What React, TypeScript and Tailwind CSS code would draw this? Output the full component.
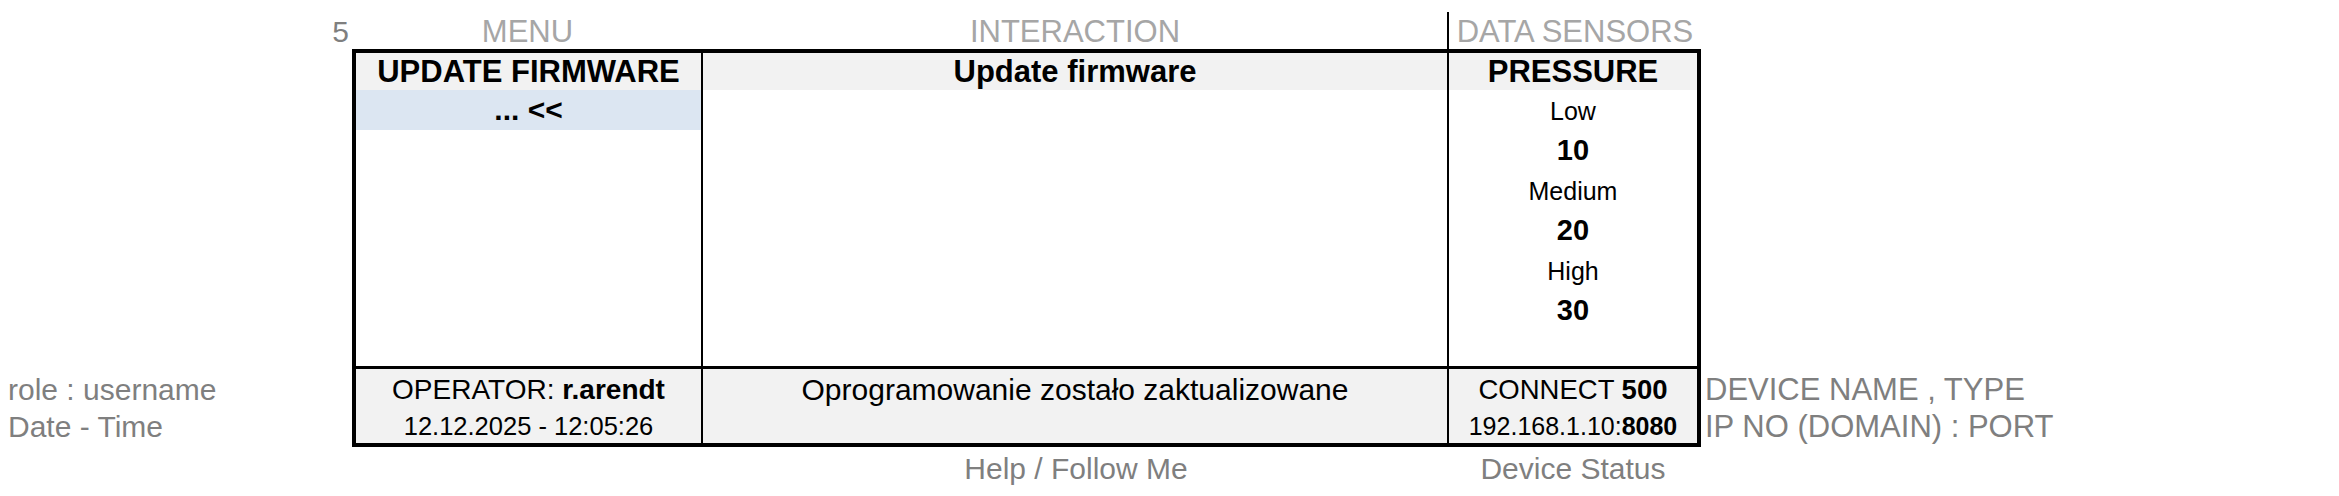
export default function App() {
  const gray = "text-[#7f7f7f]";
  const light = "text-[#a6a6a6]";
  return (
    <div className="w-[2339px] h-[496px] bg-white text-black overflow-hidden font-['Liberation_Sans',Arial,sans-serif]">
      {/* top labels */}
      <div className="flex h-[49px]">
        <div className={`w-[352px] pt-[15px] pr-[3px] text-right text-[30px] leading-[34px] ${gray}`}>5</div>
        <div className={`w-[351px] pt-[15px] text-center text-[31px] leading-[34px] ${light}`}>MENU</div>
        <div className={`w-[744px] pt-[15px] text-center text-[31px] leading-[34px] ${light}`}>INTERACTION</div>
        <div className="w-[254px] pt-[12px]">
          <div className={`h-[37px] border-l-2 border-black pt-[3px] text-center text-[31px] leading-[34px] whitespace-nowrap ${light}`}>
            DATA SENSORS
          </div>
        </div>
      </div>

      {/* table row */}
      <div className="flex">
        <div className={`w-[352px] flex flex-col justify-end pb-[4px] pl-[8px] text-[30px] ${gray}`}>
          <div className="h-[37px] pt-[4px] leading-[33px] whitespace-nowrap">role : username</div>
          <div className="h-[37px] pt-[4px] leading-[33px] whitespace-nowrap">Date - Time</div>
        </div>

        <div className="w-[1349px] h-[398px] border-4 border-black flex">
          {/* MENU column */}
          <div className="w-[347px] border-r-2 border-black flex flex-col">
            <div className="h-[37px] bg-[#f2f2f2] text-center font-bold text-[31px] leading-[37px] whitespace-nowrap">UPDATE FIRMWARE</div>
            <div className="h-[276px]">
              <div className="h-[40px] bg-[#dce6f2] text-center font-bold text-[30px] leading-[40px]">... &lt;&lt;</div>
            </div>
            <div className="h-[77px] border-t-[3px] border-black bg-[#f2f2f2] text-center">
              <div className="h-[37px] pt-[4px] text-[28px] leading-[33px] whitespace-nowrap">
                OPERATOR: <span className="font-bold">r.arendt</span>
              </div>
              <div className="h-[37px] pt-[4px] text-[25.5px] leading-[33px] whitespace-nowrap">12.12.2025 - 12:05:26</div>
            </div>
          </div>

          {/* INTERACTION column */}
          <div className="w-[746px] border-r-2 border-black flex flex-col">
            <div className="h-[37px] bg-[#f2f2f2] text-center font-bold text-[31px] leading-[37px]">Update firmware</div>
            <div className="h-[276px]" />
            <div className="h-[77px] border-t-[3px] border-black bg-[#f2f2f2] text-center">
              <div className="h-[37px] pt-[4px] text-[30px] leading-[33px] whitespace-nowrap">Oprogramowanie zostało zaktualizowane</div>
              <div className="h-[37px]" />
            </div>
          </div>

          {/* DATA column */}
          <div className="w-[248px] flex flex-col">
            <div className="h-[37px] bg-[#f2f2f2] text-center font-bold text-[31px] leading-[37px]">PRESSURE</div>
            <div className="h-[276px] text-center">
              <div className="h-[40px] pt-[3px] text-[25px] leading-[37px]">Low</div>
              <div className="h-[40px] font-bold text-[29px] leading-[40px]">10</div>
              <div className="h-[40px] pt-[3px] text-[25px] leading-[37px]">Medium</div>
              <div className="h-[40px] font-bold text-[29px] leading-[40px]">20</div>
              <div className="h-[40px] pt-[3px] text-[25px] leading-[37px]">High</div>
              <div className="h-[40px] font-bold text-[29px] leading-[40px]">30</div>
            </div>
            <div className="h-[77px] border-t-[3px] border-black bg-[#f2f2f2] text-center">
              <div className="h-[37px] pt-[4px] text-[27.5px] leading-[33px] whitespace-nowrap">
                CONNECT <span className="font-bold">500</span>
              </div>
              <div className="h-[37px] pt-[4px] text-[25px] leading-[33px] whitespace-nowrap">
                192.168.1.10:<span className="font-bold">8080</span>
              </div>
            </div>
          </div>
        </div>

        <div className={`flex-1 flex flex-col justify-end pb-[4px] pl-[4px] text-[31px] ${gray}`}>
          <div className="h-[37px] pt-[4px] leading-[33px] whitespace-nowrap">DEVICE NAME , TYPE</div>
          <div className="h-[37px] pt-[4px] leading-[33px] whitespace-nowrap">IP NO (DOMAIN) : PORT</div>
        </div>
      </div>

      {/* bottom labels */}
      <div className={`flex pt-[5px] text-[30px] leading-[34px] ${gray}`}>
        <div className="w-[703px]" />
        <div className="w-[746px] text-center">Help / Follow Me</div>
        <div className="w-[248px] text-center">Device Status</div>
      </div>
    </div>
  );
}
